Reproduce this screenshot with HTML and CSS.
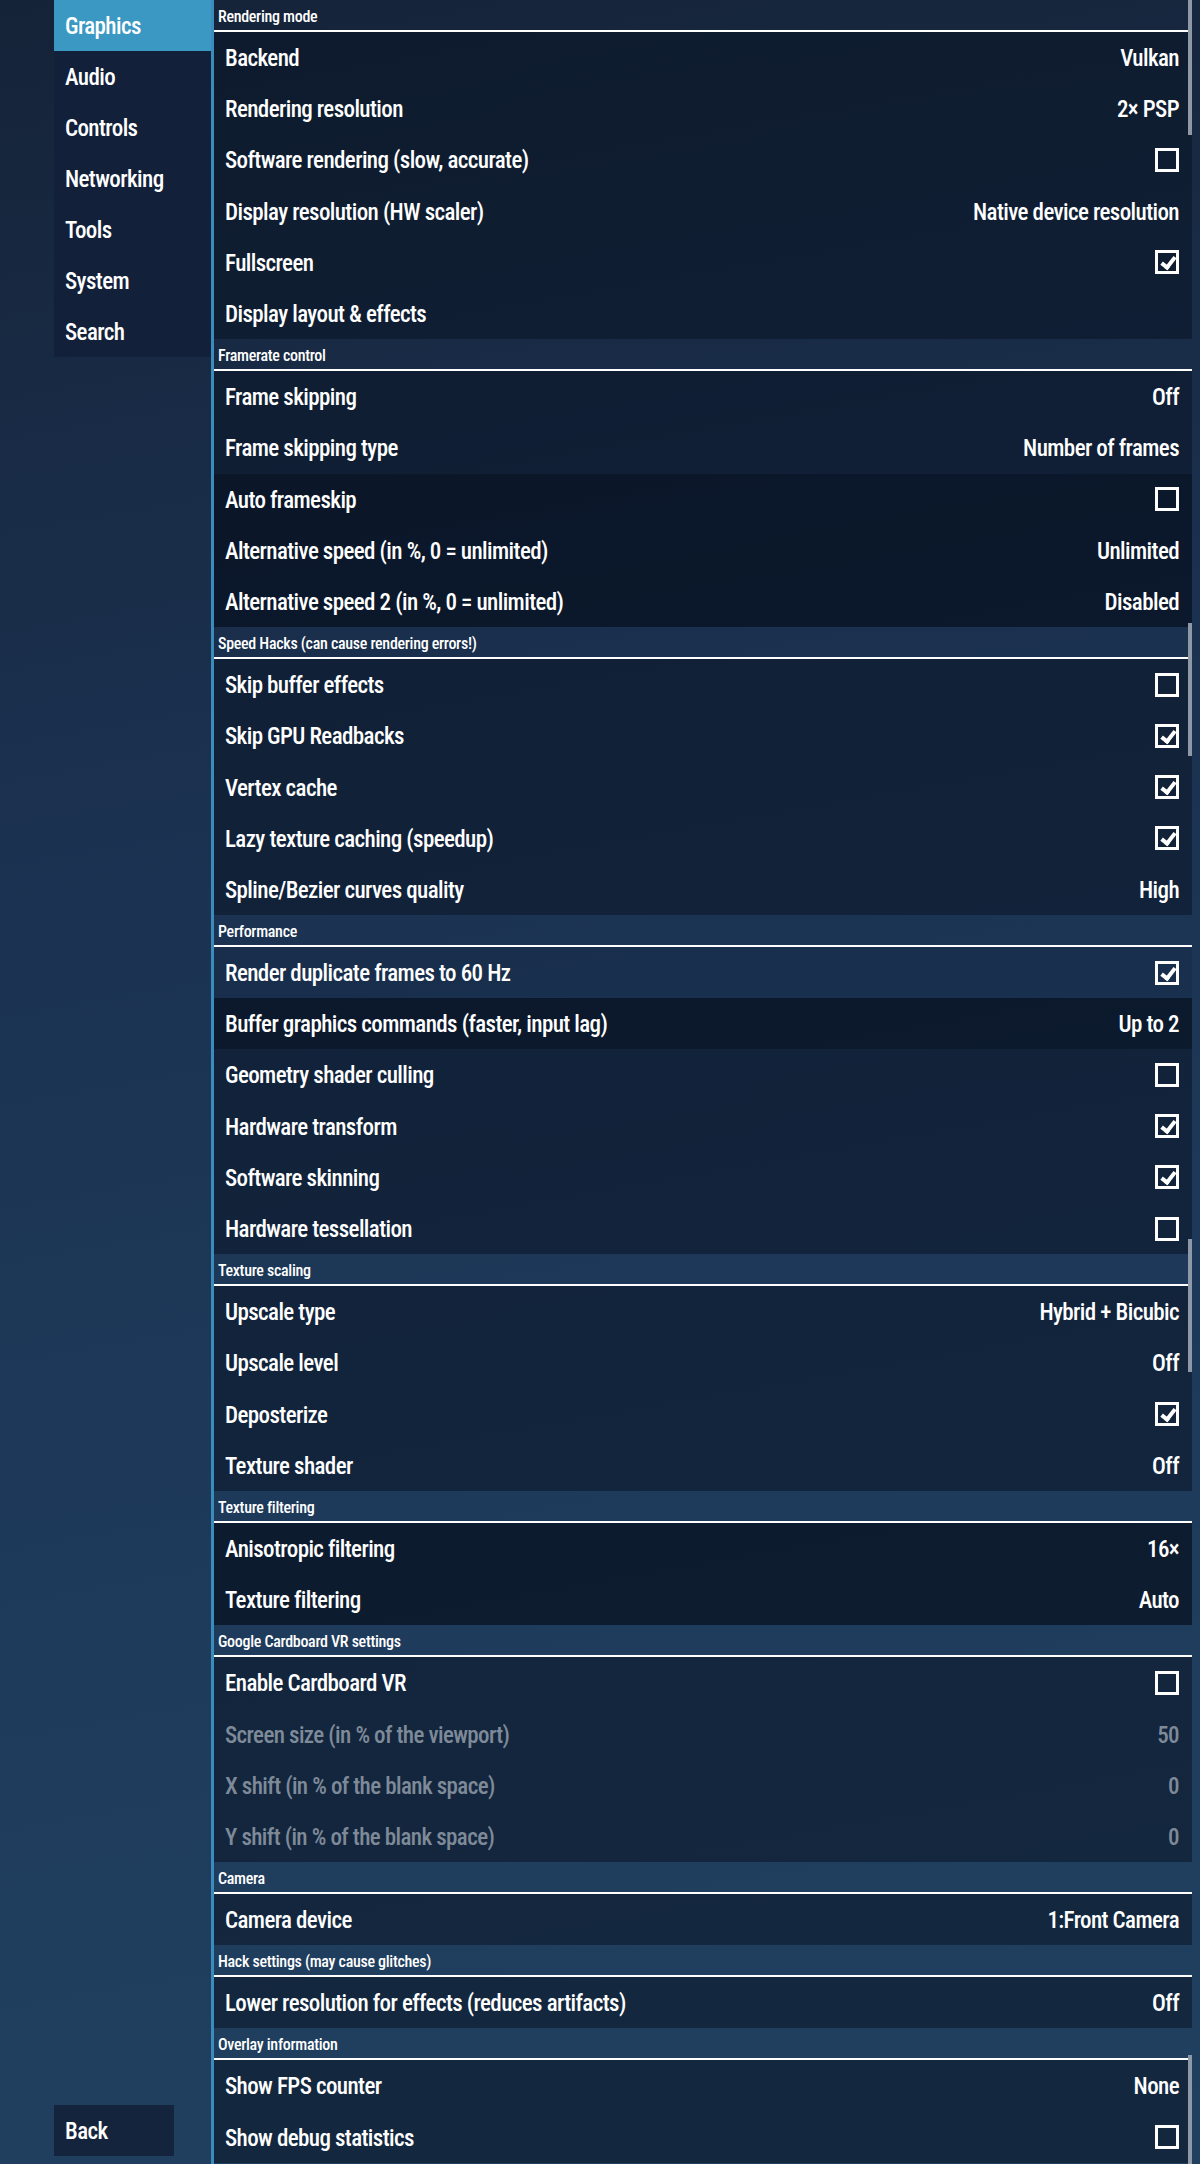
FILE: index.html
```html
<!DOCTYPE html>
<html>
<head>
<meta charset="utf-8">
<link rel="stylesheet" href="styles.css">
</head>
<body>
<div class="app">
  <aside class="sidebar">
    <nav class="tabs">
      <div class="tab active">Graphics</div>
      <div class="tab">Audio</div>
      <div class="tab">Controls</div>
      <div class="tab">Networking</div>
      <div class="tab">Tools</div>
      <div class="tab">System</div>
      <div class="tab">Search</div>
    </nav>
    <div class="back">Back</div>
  </aside>
  <main class="content">
    <div class="hdr">Rendering mode</div>
    <div class="row"><span>Backend</span><span>Vulkan</span></div>
    <div class="row"><span>Rendering resolution</span><span>2× PSP</span></div>
    <div class="row"><span>Software rendering (slow, accurate)</span><span class="cb"></span></div>
    <div class="row"><span>Display resolution (HW scaler)</span><span>Native device resolution</span></div>
    <div class="row"><span>Fullscreen</span><span class="cb on"></span></div>
    <div class="row"><span>Display layout &amp; effects</span></div>

    <div class="hdr">Framerate control</div>
    <div class="row"><span>Frame skipping</span><span>Off</span></div>
    <div class="row"><span>Frame skipping type</span><span>Number of frames</span></div>
    <div class="row dk"><span>Auto frameskip</span><span class="cb"></span></div>
    <div class="row dk"><span>Alternative speed (in %, 0 = unlimited)</span><span>Unlimited</span></div>
    <div class="row dk"><span>Alternative speed 2 (in %, 0 = unlimited)</span><span>Disabled</span></div>

    <div class="hdr">Speed Hacks (can cause rendering errors!)</div>
    <div class="row"><span>Skip buffer effects</span><span class="cb"></span></div>
    <div class="row"><span>Skip GPU Readbacks</span><span class="cb on"></span></div>
    <div class="row"><span>Vertex cache</span><span class="cb on"></span></div>
    <div class="row"><span>Lazy texture caching (speedup)</span><span class="cb on"></span></div>
    <div class="row"><span>Spline/Bezier curves quality</span><span>High</span></div>

    <div class="hdr">Performance</div>
    <div class="row lt"><span>Render duplicate frames to 60 Hz</span><span class="cb on"></span></div>
    <div class="row dk"><span>Buffer graphics commands (faster, input lag)</span><span>Up to 2</span></div>
    <div class="row"><span>Geometry shader culling</span><span class="cb"></span></div>
    <div class="row"><span>Hardware transform</span><span class="cb on"></span></div>
    <div class="row"><span>Software skinning</span><span class="cb on"></span></div>
    <div class="row"><span>Hardware tessellation</span><span class="cb"></span></div>

    <div class="hdr">Texture scaling</div>
    <div class="row"><span>Upscale type</span><span>Hybrid + Bicubic</span></div>
    <div class="row"><span>Upscale level</span><span>Off</span></div>
    <div class="row"><span>Deposterize</span><span class="cb on"></span></div>
    <div class="row"><span>Texture shader</span><span>Off</span></div>

    <div class="hdr">Texture filtering</div>
    <div class="row dk"><span>Anisotropic filtering</span><span>16×</span></div>
    <div class="row dk"><span>Texture filtering</span><span>Auto</span></div>

    <div class="hdr">Google Cardboard VR settings</div>
    <div class="row"><span>Enable Cardboard VR</span><span class="cb"></span></div>
    <div class="row off"><span>Screen size (in % of the viewport)</span><span>50</span></div>
    <div class="row off"><span>X shift (in % of the blank space)</span><span>0</span></div>
    <div class="row off"><span>Y shift (in % of the blank space)</span><span>0</span></div>

    <div class="hdr">Camera</div>
    <div class="row"><span>Camera device</span><span>1:Front Camera</span></div>

    <div class="hdr">Hack settings (may cause glitches)</div>
    <div class="row"><span>Lower resolution for effects (reduces artifacts)</span><span>Off</span></div>

    <div class="hdr">Overlay information</div>
    <div class="row"><span>Show FPS counter</span><span>None</span></div>
    <div class="row"><span>Show debug statistics</span><span class="cb"></span></div>
  </main>
</div>
<div class="sbar s1"></div>
<div class="sbar s2"></div>
<div class="sbar s3"></div>
<div class="sbar s4"></div>
</body>
</html>
```

FILE: styles.css
```css
html, body {
  margin: 0;
  padding: 0;
}
body {
  width: 1200px;
  height: 2164px;
  overflow: hidden;
  position: relative;
  background: linear-gradient(170deg, #152338 0%, #1b3150 35%, #1e3b5c 70%, #21405f 100%);
  font-family: "Roboto Condensed", "Roboto", "Liberation Sans", sans-serif;
  font-stretch: condensed;
  color: #ffffff;
}
.app {
  display: flex;
  height: 2164px;
  padding-left: 54px;
  box-sizing: border-box;
}
.sidebar {
  width: 157px;
  display: flex;
  flex-direction: column;
  justify-content: space-between;
}
.tabs {
  background: #13203a;
}
.tab {
  height: 51px;
  display: flex;
  align-items: center;
  padding: 2px 0 0 11px;
  box-sizing: border-box;
  font-size: 23px;
  font-weight: 500;
  letter-spacing: -0.6px;
}
.tab.active {
  background: #3a98c3;
}
.back {
  width: 120px;
  height: 51px;
  margin-bottom: 8px;
  background: #15243d;
  display: flex;
  align-items: center;
  padding: 2px 0 0 11px;
  box-sizing: border-box;
  font-size: 23px;
  font-weight: 500;
  letter-spacing: -0.6px;
}
.content {
  width: 981px;
  border-left: 3px solid #3a8cbc;
  box-sizing: border-box;
  display: flex;
  flex-direction: column;
}
.hdr {
  border-bottom: 2px solid #ffffff;
  font-size: 16px;
  font-weight: 500;
  letter-spacing: -0.3px;
  padding: 3px 0 0 4px;
  height: 27px;
  line-height: 27px;
}
.row {
  height: 51.2px;
  flex: 0 0 51.2px;
  display: flex;
  align-items: center;
  justify-content: space-between;
  padding: 2px 13px 0 11px;
  box-sizing: border-box;
  font-size: 23px;
  font-weight: 500;
  letter-spacing: -0.6px;
  background: rgba(10, 20, 36, 0.55);
}
.row.dk {
  background: rgba(6, 14, 28, 0.7);
}
.row.lt {
  background: rgba(20, 40, 68, 0.4);
}
.row.off {
  color: #7f8a99;
}
.cb {
  width: 24px;
  height: 24px;
  border: 3px solid #ffffff;
  box-sizing: border-box;
  position: relative;
  margin-top: -2px;
}
.cb.on::after {
  content: "";
  position: absolute;
  left: 6px;
  top: 1px;
  width: 5px;
  height: 11px;
  border-right: 4px solid #ffffff;
  border-bottom: 4px solid #ffffff;
  transform: rotate(38deg);
}
.sbar {
  position: absolute;
  left: 1188px;
  width: 4px;
  background: #8e98a6;
}
.s1 { top: 0; height: 135px; }
.s2 { top: 623px; height: 133px; }
.s3 { top: 1239px; height: 133px; }
.s4 { top: 2055px; height: 109px; }
```
